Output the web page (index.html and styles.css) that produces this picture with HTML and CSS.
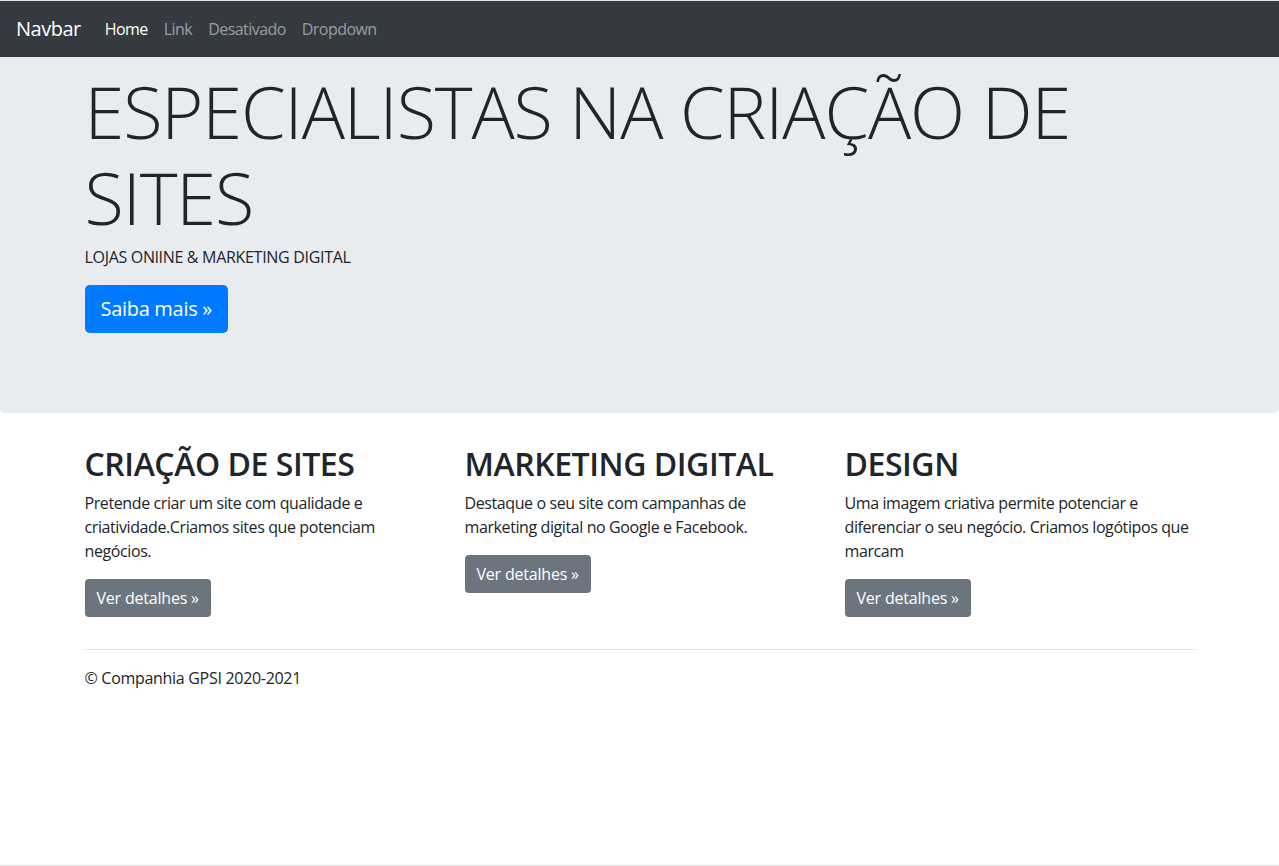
FILE: index.html
```html
<!DOCTYPE html>
<html lang="pt">
<head>
<meta charset="utf-8">
<title>Jumbotron</title>
<link rel="stylesheet" href="styles.css">
</head>
<body>
<div class="page">
  <nav class="navbar">
    <a class="brand" href="#">Navbar</a>
    <ul class="nav">
      <li><a class="nav-link active" href="#">Home</a></li>
      <li><a class="nav-link" href="#">Link</a></li>
      <li><a class="nav-link" href="#">Desativado</a></li>
      <li><a class="nav-link" href="#">Dropdown</a></li>
    </ul>
  </nav>
  <main>
    <section class="jumbotron">
      <div class="container">
        <h1 class="display">ESPECIALISTAS NA CRIAÇÃO DE SITES</h1>
        <p class="lead">LOJAS ONlINE &amp; MARKETING DIGITAL</p>
        <p class="cta"><a class="btn btn-primary btn-lg" href="#">Saiba mais »</a></p>
      </div>
    </section>
    <div class="container">
      <div class="row">
        <div class="col">
          <h2>CRIAÇÃO DE SITES</h2>
          <p>Pretende criar um site com qualidade e criatividade.Criamos sites que potenciam negócios.</p>
          <p><a class="btn btn-secondary" href="#">Ver detalhes »</a></p>
        </div>
        <div class="col">
          <h2>MARKETING DIGITAL</h2>
          <p>Destaque o seu site com campanhas de marketing digital no Google e Facebook.</p>
          <p><a class="btn btn-secondary" href="#">Ver detalhes »</a></p>
        </div>
        <div class="col">
          <h2>DESIGN</h2>
          <p>Uma imagem criativa permite potenciar e diferenciar o seu negócio. Criamos logótipos que marcam</p>
          <p><a class="btn btn-secondary" href="#">Ver detalhes »</a></p>
        </div>
      </div>
      <hr class="divider">
      <footer class="footer">
        <p>© Companhia GPSI 2020-2021</p>
      </footer>
    </div>
  </main>
</div>
</body>
</html>
```
FILE: styles.css
```css
* { box-sizing: border-box; }
html, body { margin: 0; padding: 0; }
body {
  font-family: "Open Sans", "Noto Sans", "Liberation Sans", sans-serif;
  font-size: 16px;
  line-height: 1.5;
  color: #212529;
  background: #fff;
}
.page {
  min-height: 866px;
  border-top: 1px solid #e2e2e2;
  border-bottom: 1px solid #dcdcdc;
}
a { text-decoration: none; }
p { margin: 0 0 16px; }

.navbar {
  background: #343a40;
  height: 56px;
  display: flex;
  align-items: center;
  padding: 8px 16px;
}
.brand {
  color: #fff;
  font-size: 20px;
  line-height: 30px;
  margin-right: 16px;
  letter-spacing: -0.5px;
}
.nav {
  list-style: none;
  margin: 0;
  padding: 0;
  display: flex;
}
.nav-link {
  display: block;
  padding: 8px 8px;
  color: rgba(255,255,255,.5);
  letter-spacing: -0.55px;
}
.nav-link.active { color: #fff; }

.jumbotron {
  background: #e9ecef;
  border-radius: 0 0 4.8px 4.8px;
  padding: 11px 0 64px;
  margin-bottom: 32px;
}
.container {
  max-width: 1140px;
  margin: 0 auto;
  padding: 0 15px;
}
.display {
  font-size: 72px;
  font-weight: 300;
  line-height: 1.2;
  margin: 0 0 4px;
  letter-spacing: -1.1px;
}
.lead {
  font-size: 16px;
  line-height: 24px;
  margin-bottom: 16px;
  letter-spacing: -0.3px;
}
.btn {
  display: inline-block;
  color: #fff;
  font-size: 16px;
  line-height: 24px;
  padding: 7px 12px;
  border-radius: 4px;
  letter-spacing: -0.2px;
}
.btn-lg {
  font-size: 20px;
  line-height: 30px;
  padding: 9px 16px;
  border-radius: 4.8px;
  letter-spacing: -0.3px;
}
.btn-primary { background: #007bff; }
.btn-secondary { background: #6c757d; }

.row {
  display: grid;
  grid-template-columns: repeat(3, 1fr);
  margin: 0 -15px;
}
.col { padding: 0 15px; }
.col h2 {
  font-size: 32px;
  font-weight: 600;
  line-height: 1.2;
  margin: 0 0 8px;
  letter-spacing: -0.45px;
}
.col p { letter-spacing: -0.4px; }

.divider {
  border: 0;
  border-top: 1px solid rgba(0,0,0,.1);
  margin: 16px 0;
}
.footer p { letter-spacing: -0.3px; }
```
